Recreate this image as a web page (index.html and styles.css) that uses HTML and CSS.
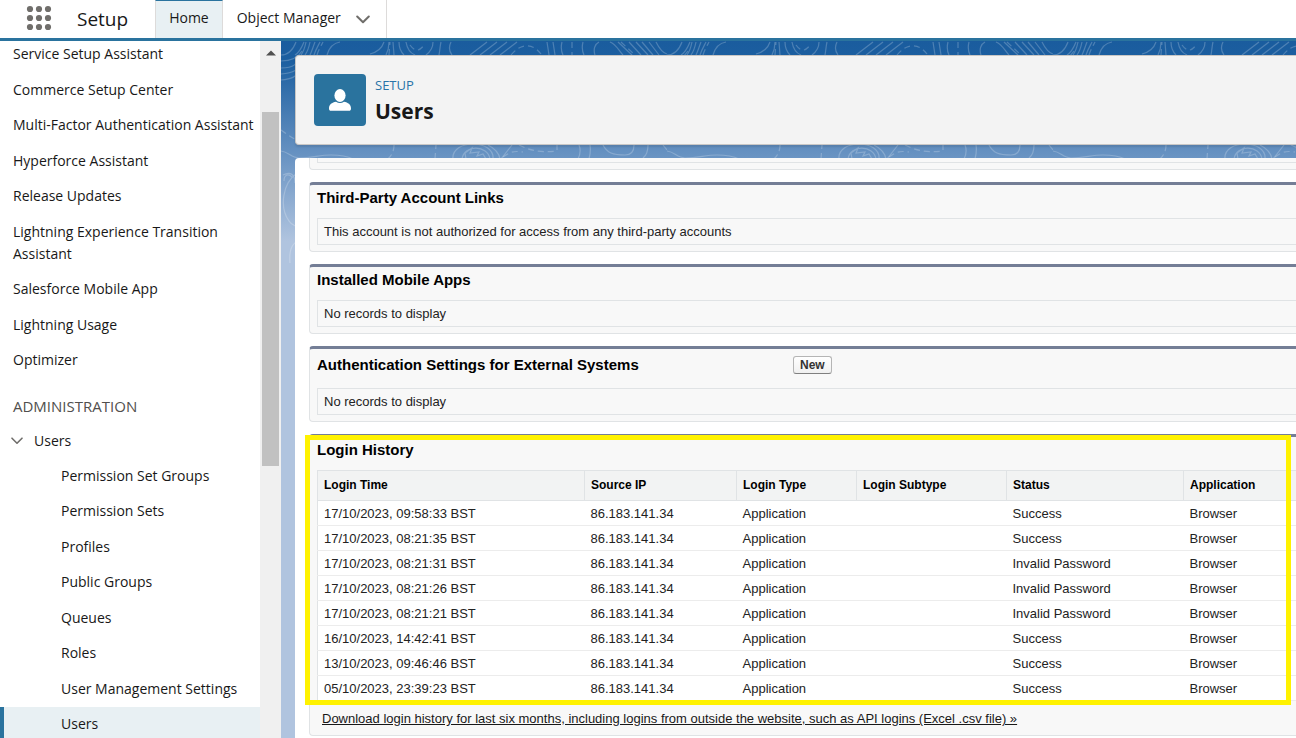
FILE: index.html
```html
<!DOCTYPE html>
<html lang="en">
<head>
<meta charset="utf-8">
<title>Users | Setup</title>
<link rel="stylesheet" href="styles.css">
</head>
<body>
<header class="topbar">
  <button class="launcher" aria-label="App Launcher">
    <svg width="26" height="26" viewBox="0 0 26 26" fill="#706e6b"><circle cx="4" cy="4" r="3.1"/><circle cx="13" cy="4" r="3.1"/><circle cx="22" cy="4" r="3.1"/><circle cx="4" cy="13" r="3.1"/><circle cx="13" cy="13" r="3.1"/><circle cx="22" cy="13" r="3.1"/><circle cx="4" cy="22" r="3.1"/><circle cx="13" cy="22" r="3.1"/><circle cx="22" cy="22" r="3.1"/></svg>
  </button>
  <span class="app-name">Setup</span>
  <nav class="tabs">
    <a class="tab tab-active" href="#home">Home</a>
    <a class="tab" href="#objects">Object Manager
      <svg width="14" height="9" viewBox="0 0 14 9" fill="none" stroke="#706e6b" stroke-width="2" stroke-linecap="round" stroke-linejoin="round"><path d="M1.2 1.5 7 7.3l5.800-5.800"/></svg>
    </a>
  </nav>
</header>
<div class="layout">
  <aside class="sidebar">
    <nav class="tree">
      <ul class="list">
        <li><a href="#a">Service Setup Assistant</a></li>
        <li><a href="#a">Commerce Setup Center</a></li>
        <li><a href="#a">Multi-Factor Authentication Assistant</a></li>
        <li><a href="#a">Hyperforce Assistant</a></li>
        <li><a href="#a">Release Updates</a></li>
        <li><a href="#a">Lightning Experience Transition Assistant</a></li>
        <li><a href="#a">Salesforce Mobile App</a></li>
        <li><a href="#a">Lightning Usage</a></li>
        <li><a href="#a">Optimizer</a></li>
      </ul>
      <h2 class="group">ADMINISTRATION</h2>
      <button class="branch"><svg width="12" height="8" viewBox="0 0 12 8" fill="none" stroke="#706e6b" stroke-width="1.600" stroke-linecap="round" stroke-linejoin="round"><path d="M1 1.200 6 6.200l5-5"/></svg>Users</button>
      <ul class="list sublist">
        <li><a href="#a">Permission Set Groups</a></li>
        <li><a href="#a">Permission Sets</a></li>
        <li><a href="#a">Profiles</a></li>
        <li><a href="#a">Public Groups</a></li>
        <li><a href="#a">Queues</a></li>
        <li><a href="#a">Roles</a></li>
        <li><a href="#a">User Management Settings</a></li>
        <li class="selected"><a href="#a">Users</a></li>
      </ul>
    </nav>
    <div class="scrollbar">
      <svg width="10" height="6" viewBox="0 0 10 6"><path d="M0 5.500 5 .5l5 5z" fill="#505050"/></svg>
      <div class="thumb"></div>
    </div>
  </aside>
  <main class="main">
    <svg class="contours" width="100%" height="260" aria-hidden="true">
      <defs>
        <pattern id="topo" width="386" height="260" patternUnits="userSpaceOnUse">
          <g fill="none" stroke="#fff" stroke-opacity=".22" stroke-width="1.200">
            <path d="M0 14c7 0 12-5 15-13M14 14c5-3 7-8 9-13M20 14c3-4 4-8 5-13M24 14c3-4 4-8 5-13M29 14c2-4 3-8 5-13M33 14c2-6 4-9 6-13M46 14c2-7 6-12 13-13M89 13c8-2 12-6 14-12M105 14c2-4 3-8 3-13M112 1l1 13M118 1c0 6 2 10 5 13M125 1c1 6 4 11 9 13M145 14c4-3 7-7 7-13M158 14c1-5 1-9 2-13M171 14c-3-4-3-9-1-13M189 14 206 1M199 14 216 1M209 14 226 1M219 14 236 1M268 14l-2-13M274 14l-2-13M282 14c-2-4-2-9-1-13M303 14c-2-4-2-9-1-13M314 14c-2-6 0-11 4-13M329 1c6 2 9 9 13 13M337 1l14 13M348 1l12 13M355 1l12 13M361 1l11 13M368 1l10 13M375 1c3 6 7 11 11 12"/>
            <path stroke-dasharray="6 4" d="M36 14c2-6 4-9 6-13M108 14 109 1M129 4c5 7 9 7 15-1M230 14c8-10 20-14 30-1M291 1v13M340 1l14 13"/>
            <path d="M0 20c12 0 18-5 21-10M0 27c14 0 16-5 18-10M0 33c14-1 17-5 20-10M0 39c12-1 15-4 18-8"/>
            <path d="M0 110c8 1 10 7 18 7 14 0 20-3 32-3 10 0 16 1 22 4M172 118c-2-20 42-20 40 0M181 118c2-15 26-14 28 0M185 118l-1-6 7-5-2 5 9-1-2 4 6-2 3 5M207 104c8 4 11 8 12 14M220 118l11-14M298 104c2 5 1 10-1 14M309 104c1 5 0 10-1 14M322 104c4 8 10 10 22 10 6 0 9-4 9-10M367 104c0 6-1 10-5 13M382 104l4 5"/>
            <path stroke-dasharray="6 4" d="M0 89c8 6 12 8 22 14M113 104c0 6-2 10-6 14M154 118l1-14M222 116c8-6 12-6 20-5M238 104c10 5 20 8 38 6v-6"/>
            <path d="M2 134c8-4 12 0 12 8M15 133C2 142-2 166 8 180c3 5 6 4 10 7M3 140c0-6 4-8 8-4M18 200c-8 2-10 10-9 22"/>
          </g>
        </pattern>
      </defs>
      <rect width="100%" height="260" fill="url(#topo)"/>
    </svg>
    <div class="content">
      <section class="page-header">
        <svg class="page-icon" width="52" height="52" viewBox="0 0 52 52"><rect width="52" height="52" rx="4" fill="#2a739e"/><ellipse cx="26" cy="21.500" rx="5.600" ry="6.500" fill="#fff"/><path d="M15 34.500c0-4 3-6 7-6.700 2.500 1.600 5.500 1.600 8 0 4 .7 7 2.700 7 6.700 0 1.500-.7 2.300-2 2.300H17c-1.300 0-2-.8-2-2.300z" fill="#fff"/></svg>
        <div>
          <p class="eyebrow">SETUP</p>
          <h1 class="title">Users</h1>
        </div>
      </section>
      <div class="panel">
        <section class="card card-cut"><div class="box box-cut"></div></section>
        <section class="card">
          <h3 class="card-title">Third-Party Account Links</h3>
          <div class="box">This account is not authorized for access from any third-party accounts</div>
        </section>
        <section class="card">
          <h3 class="card-title">Installed Mobile Apps</h3>
          <div class="box">No records to display</div>
        </section>
        <section class="card">
          <div class="card-head">
            <h3 class="card-title">Authentication Settings for External Systems</h3>
            <button class="new">New</button>
          </div>
          <div class="box">No records to display</div>
        </section>
        <section class="card history">
          <h3 class="card-title">Login History</h3>
          <table class="table">
            <colgroup><col class="c-time"><col class="c-ip"><col class="c-type"><col class="c-sub"><col class="c-status"><col></colgroup>
            <thead><tr><th>Login Time</th><th>Source IP</th><th>Login Type</th><th>Login Subtype</th><th>Status</th><th>Application</th></tr></thead>
            <tbody>
              <tr><td>17/10/2023, 09:58:33 BST</td><td>86.183.141.34</td><td>Application</td><td></td><td>Success</td><td>Browser</td></tr>
              <tr><td>17/10/2023, 08:21:35 BST</td><td>86.183.141.34</td><td>Application</td><td></td><td>Success</td><td>Browser</td></tr>
              <tr><td>17/10/2023, 08:21:31 BST</td><td>86.183.141.34</td><td>Application</td><td></td><td>Invalid Password</td><td>Browser</td></tr>
              <tr><td>17/10/2023, 08:21:26 BST</td><td>86.183.141.34</td><td>Application</td><td></td><td>Invalid Password</td><td>Browser</td></tr>
              <tr><td>17/10/2023, 08:21:21 BST</td><td>86.183.141.34</td><td>Application</td><td></td><td>Invalid Password</td><td>Browser</td></tr>
              <tr><td>16/10/2023, 14:42:41 BST</td><td>86.183.141.34</td><td>Application</td><td></td><td>Success</td><td>Browser</td></tr>
              <tr><td>13/10/2023, 09:46:46 BST</td><td>86.183.141.34</td><td>Application</td><td></td><td>Success</td><td>Browser</td></tr>
              <tr><td>05/10/2023, 23:39:23 BST</td><td>86.183.141.34</td><td>Application</td><td></td><td>Success</td><td>Browser</td></tr>
            </tbody>
          </table>
          <a class="download" href="#csv">Download login history for last six months, including logins from outside the website, such as API logins (Excel .csv file) »</a>
          <div class="highlight"></div>
        </section>
      </div>
    </div>
  </main>
</div>
</body>
</html>
```
FILE: styles.css
```css
* { box-sizing: border-box; }
body {
  margin: 0;
  height: 100vh;
  display: flex;
  flex-direction: column;
  overflow: hidden;
  font-family: "Open Sans", "Noto Sans", sans-serif;
  font-size: 14px;
  line-height: 22px;
  color: #181818;
  background: #fff;
}
a { color: inherit; text-decoration: none; }
button { font: inherit; color: inherit; background: none; border: 0; padding: 0; }
h1, h2, h3, p, ul { margin: 0; padding: 0; }
ul { list-style: none; }

.topbar { display: flex; flex: none; align-items: stretch; border-bottom: 3px solid #2a739e; }
.launcher { display: flex; padding: 5px 0 7px 26px; }
.app-name { padding: 8px 27px 0 25px; font-size: 19px; }
.tabs { display: flex; }
.tab {
  display: flex;
  align-items: center;
  gap: 15px;
  padding: 0 16px 2px 14px;
  border-right: 1px solid #dddbda;
}
.tab svg { margin-top: 3px; }
.tab-active { padding: 0 13px 4px; background: #e8f0f3; border-left: 1px solid #dddbda; border-top: 1px solid #2a739e; }

.layout { display: flex; flex: 1; min-height: 0; }
.sidebar { display: flex; flex: none; width: 281px; }
.tree { flex: 1; overflow: hidden; padding-top: 2px; }
.list li { padding: 0 0 13px 13px; }
.list li:nth-child(odd) { padding-bottom: 14px; }
.list a { display: block; }
.group { padding: 10px 13px 13px; font-size: 15px; font-weight: 400; color: #514f4d; }
.branch { display: flex; align-items: center; gap: 11px; padding: 0 11px 13px; }
.list.sublist li { padding: 0 0 14px 61px; }
.list.sublist li:nth-child(odd) { padding-bottom: 13px; }
.list.sublist .selected { padding: 6px 0 8px 57px; margin-top: -6px; background: #e8f0f3; border-left: 4px solid #2a739e; }
.scrollbar { flex: none; width: 21px; padding: 9px 2px 0; display: flex; flex-direction: column; align-items: center; gap: 56px; background: #f0f0f0; }
.thumb { width: 17px; height: 354px; background: #c1c1c1; }

.main {
  position: relative;
  flex: 1;
  min-width: 0;
  overflow: hidden;
  background: linear-gradient(#1a5c9e 0, #1c5fa0 20px, #6a94c3 117px, #b0c4df 200px);
}
.contours { position: absolute; left: 0; top: 0; }
.content { position: relative; display: flex; flex-direction: column; height: 100%; gap: 13px; padding: 14px 0 0 14px; }
.page-header {
  display: flex;
  flex: none;
  gap: 9px;
  padding: 18px;
  border: 1px solid #c9c7c5;
  border-right: 0;
  border-radius: 4px 0 0 4px;
  background: #f3f3f3;
  box-shadow: 0 2px 2px rgba(0, 0, 0, .1);
}
.eyebrow { font-size: 13px; color: #2a73a8; }
.title { font-size: 21px; line-height: 30px; }

.panel {
  flex: 1;
  padding-left: 14px;
  border-radius: 4px 0 0 0;
  background: #fff;
  font-family: "Liberation Sans", Arial, sans-serif;
  font-size: 13px;
  line-height: 15px;
}
.card {
  margin-bottom: 12px;
  padding: 0 0 6px 7px;
  border: 1px solid #e0e3e5;
  border-top: 3px solid #747e96;
  border-right: 0;
  border-radius: 4px 0 0 4px;
  background: #f8f8f8;
}
.card-cut { height: 12px; border-top: 0; border-radius: 0 0 0 4px; }
.box-cut.box { height: 5px; padding: 0; border-top: 0; }
.card-title { padding: 4px 0 11px; font-size: 15px; line-height: 18px; color: #000; }
.card-head { display: flex; align-items: flex-start; padding-top: 3px; }
.card-head .card-title { flex: none; width: 476px; padding-bottom: 14px; }
.new {
  margin-top: 4px;
  padding: 0 6px;
  border: 1px solid #b5b5b5;
  border-bottom-color: #7f7f7f;
  border-radius: 3px;
  background: linear-gradient(#fff, #f0f0f0);
  font-size: 12px;
  line-height: 16px;
  font-weight: 700;
  color: #333;
}
.box { padding: 5px 6px; border: 1px solid #e0e3e5; border-right: 0; color: #222; }

.history { position: relative; }
.table { width: 100%; table-layout: fixed; border-collapse: collapse; border-left: 1px solid #e0e3e5; background: #fff; }
.c-time { width: 267px; }
.c-ip { width: 152px; }
.c-type { width: 120px; }
.c-sub { width: 150px; }
.c-status { width: 177px; }
.table th { height: 30px; padding: 0 6px; border: 1px solid #e0e3e5; border-right: 0; background: #f2f3f3; font-size: 12px; text-align: left; color: #000; }
.table td { height: 25px; padding: 0 6px; border-bottom: 1px solid #ececec; color: #222; }
.download { display: block; padding: 10px 5px 3px; text-decoration: underline; }
.highlight { position: absolute; left: -5px; right: 5px; top: -2px; bottom: 30px; border: 5px solid #fff200; }
```
